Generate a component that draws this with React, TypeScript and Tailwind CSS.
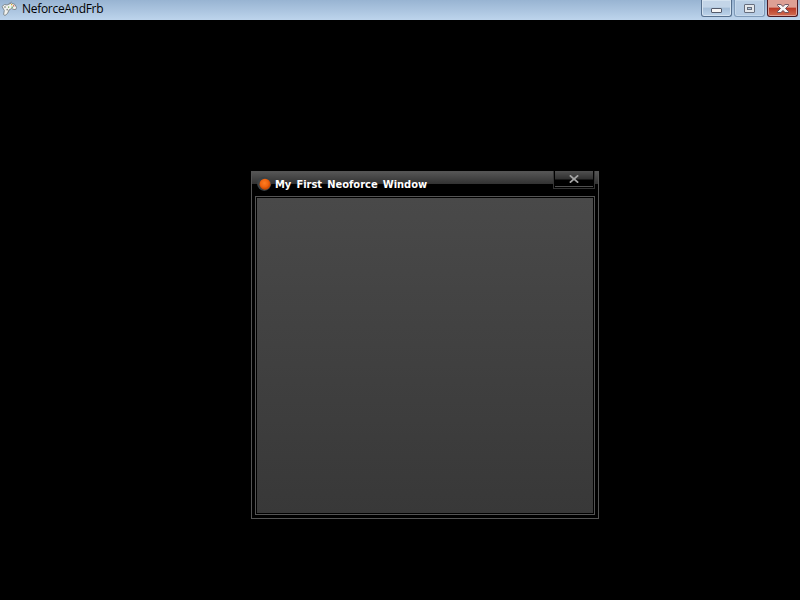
import React from "react";

function ControllerIcon() {
  return (
    <svg className="block h-4 w-[18px] shrink-0" viewBox="0 0 18 16">
      <path d="M9 3.5 C9 1 10.5 2.5 11.5 .5" fill="none" stroke="#89929a" strokeWidth=".8" />
      <path
        d="M2 5.5 L4.5 3.5 L7 4 L11.5 2 L15 3.5 L16.5 6.5 L15.8 8.5 L14 8.5 L11.5 7.5 L9 9 L7.5 12.5 L5 14.5 L3.6 13.5 L4.3 9.5 Z"
        fill="#f1f2ef"
        stroke="#70777a"
        strokeWidth=".8"
      />
      <circle cx="5" cy="6" r="1.1" fill="#a6aaa9" />
      <circle cx="7.2" cy="8.6" r=".9" fill="#8d9290" />
      <path d="M11 3h1.3v1.3H11z" fill="#d7a72e" />
      <path d="M13 4.2h1.3v1.3H13z" fill="#c65145" />
      <path d="M11.5 5.6h1.3v1.3h-1.3z" fill="#5fa263" />
      <path d="M8 5.5h1.2v1.2H8z" fill="#73a552" />
    </svg>
  );
}

const caption =
  "flex h-[17px] items-center justify-center rounded-b-[3px] border border-t-0";

function DesktopBar() {
  return (
    <header className="flex h-5 items-start bg-linear-to-b from-[#98b4d2] to-[#bdd4ec] pr-[2px]">
      <div className="flex h-[18px] flex-1 items-center gap-1">
        <ControllerIcon />
        <span className="font-['Open_Sans','Noto_Sans',sans-serif] text-[12px] leading-[18px] tracking-[-0.3px] text-black">
          NeforceAndFrb
        </span>
      </div>
      <div className="flex gap-[2px]">
        <div className={`${caption} w-[31px] border-[#56708e] bg-linear-to-b from-[#c3d5e8] from-45% via-[#a4bdd7] via-50% to-[#bdd4eb] shadow-[inset_0_0_0_1px_#d5e3f0]`}>
          <svg className="mt-[5px] h-[5px] w-[11px]" viewBox="0 0 11 5">
            <rect x=".5" y=".5" width="10" height="4" rx=".5" fill="#f5f5f5" stroke="#545b6b" />
          </svg>
        </div>
        <div className={`${caption} w-[31px] border-[#7f9ab8] bg-linear-to-b from-[#b9cee4] to-[#b4cbe4] shadow-[inset_0_0_0_1px_#c6d9eb]`}>
          <svg className="mt-px h-[9px] w-[11px]" viewBox="0 0 11 9">
            <rect x=".5" y=".5" width="10" height="8" rx=".5" fill="#e4e8ec" stroke="#666e7e" />
            <rect x="3.5" y="3.5" width="4" height="2" fill="#b2c9e0" stroke="#666e7e" />
          </svg>
        </div>
        <div className={`${caption} w-[31px] border-[#4c1821] bg-linear-to-b from-[#dda095] from-45% via-[#b93725] via-50% to-[#d16d51] shadow-[inset_0_0_0_1px_#dfa095]`}>
          <svg className="mt-px h-[9px] w-[12px]" viewBox="0 0 12 9">
            <path
              d="M.5 .5H3.9L6 2.5 8.1 .5H11.5V1.5L8.5 4.5 11.5 7.5V8.5H8.1L6 6.5 3.9 8.5H.5V7.5L3.5 4.5 .5 1.5Z"
              fill="#f7f5f4"
              stroke="#5d4a58"
              strokeWidth=".9"
            />
          </svg>
        </div>
      </div>
    </header>
  );
}

function NeoforceWindow() {
  return (
    <section className="flex h-[348px] w-[348px] flex-col border border-[#545454] bg-black px-[3px] pb-[3px]">
      <div className="-mx-[3px] flex h-6 shrink-0 items-start bg-[linear-gradient(to_bottom,#555555_0px,#323232_12px,#000_12px)] pr-[3px] pl-[5px]">
        <svg className="mt-[4px] block h-4 w-4 shrink-0" viewBox="0 0 16 16">
          <defs>
            <radialGradient id="orb" cx=".45" cy=".4">
              <stop offset="0" stopColor="#ff7d22" />
              <stop offset=".7" stopColor="#f0640f" />
              <stop offset="1" stopColor="#d24f04" />
            </radialGradient>
          </defs>
          <circle cx="7.2" cy="7.8" r="7.1" fill="#3b4144" />
          <circle cx="8" cy="8.2" r="5.5" fill="url(#orb)" />
        </svg>
        <h1 className="ml-[2px] flex-1 whitespace-nowrap pt-[5px] font-['DejaVu_Sans_Condensed','DejaVu_Sans',sans-serif] text-[11px] leading-4 font-bold text-white [word-spacing:1.7px]">
          My First Neoforce Window
        </h1>
        <div className="-mt-px flex h-[18px] w-[42px] border border-t-0 border-[#343434] bg-black p-px pt-0">
          <div className="flex flex-1 justify-center border-b border-[#505050] bg-[linear-gradient(to_bottom,#505050_0px,#303030_8px,#000_9px)] pt-[4px]">
            <svg className="h-[8px] w-[10px]" viewBox="0 0 10 8">
              <path d="M.8 .3L9.2 7.7M9.2 .3L.8 7.7" fill="none" stroke="#a5a5a5" strokeWidth="1.7" />
            </svg>
          </div>
        </div>
      </div>
      <div className="flex-1 border border-[#545454] bg-black p-px">
        <div className="h-full bg-linear-to-b from-[#494949] to-[#383838]" />
      </div>
    </section>
  );
}

export default function App() {
  return (
    <main className="h-[600px] w-[800px] overflow-hidden bg-black">
      <DesktopBar />
      <div className="flex justify-end pt-[151px] pr-[201px]">
        <NeoforceWindow />
      </div>
    </main>
  );
}
